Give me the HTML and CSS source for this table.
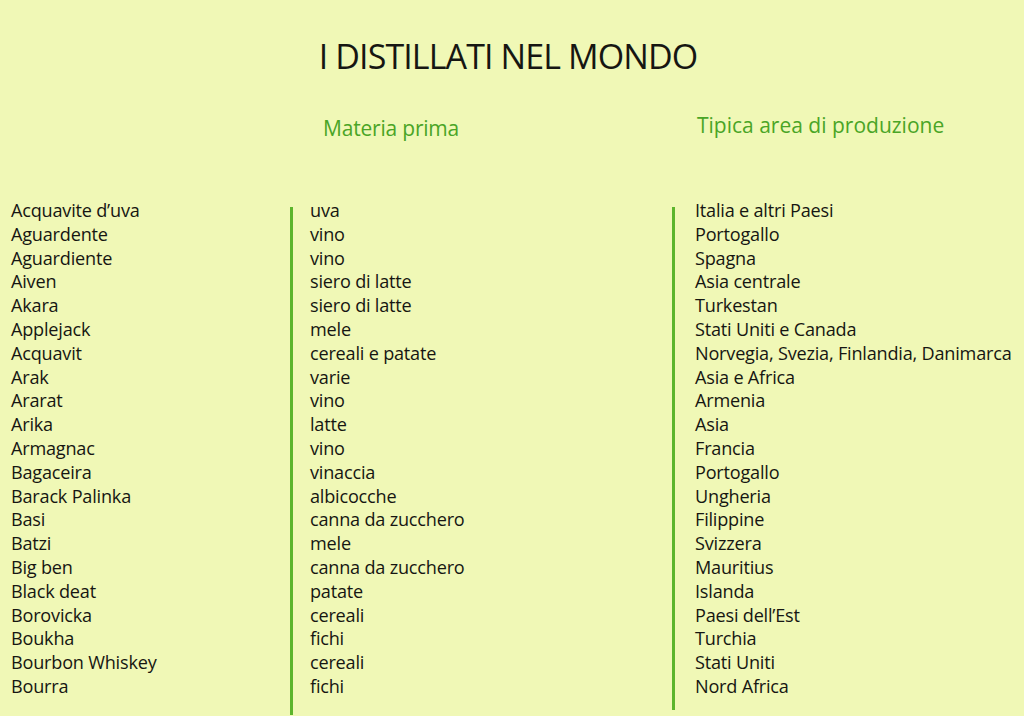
FILE: index.html
```html
<!DOCTYPE html>
<html lang="it">
<head>
<meta charset="utf-8">
<title>I distillati nel mondo</title>
<link rel="stylesheet" href="styles.css">
</head>
<body>
<main class="page">
  <h1 class="title">I DISTILLATI NEL MONDO</h1>
  <div class="heads">
    <div class="head-spacer"></div>
    <div class="head head-mid">Materia prima</div>
    <div class="head head-right">Tipica area di produzione</div>
  </div>
  <div class="table">
    <ul class="col col-name">
      <li>Acquavite d’uva</li><li>Aguardente</li><li>Aguardiente</li><li>Aiven</li><li>Akara</li><li>Applejack</li><li>Acquavit</li><li>Arak</li><li>Ararat</li><li>Arika</li><li>Armagnac</li><li>Bagaceira</li><li>Barack Palinka</li><li>Basi</li><li>Batzi</li><li>Big ben</li><li>Black deat</li><li>Borovicka</li><li>Boukha</li><li>Bourbon Whiskey</li><li>Bourra</li>
    </ul>
    <ul class="col col-mat">
      <li>uva</li><li>vino</li><li>vino</li><li>siero di latte</li><li>siero di latte</li><li>mele</li><li>cereali e patate</li><li>varie</li><li>vino</li><li>latte</li><li>vino</li><li>vinaccia</li><li>albicocche</li><li>canna da zucchero</li><li>mele</li><li>canna da zucchero</li><li>patate</li><li>cereali</li><li>fichi</li><li>cereali</li><li>fichi</li>
    </ul>
    <ul class="col col-area">
      <li>Italia e altri Paesi</li><li>Portogallo</li><li>Spagna</li><li>Asia centrale</li><li>Turkestan</li><li>Stati Uniti e Canada</li><li>Norvegia, Svezia, Finlandia, Danimarca</li><li>Asia e Africa</li><li>Armenia</li><li>Asia</li><li>Francia</li><li>Portogallo</li><li>Ungheria</li><li>Filippine</li><li>Svizzera</li><li>Mauritius</li><li>Islanda</li><li>Paesi dell’Est</li><li>Turchia</li><li>Stati Uniti</li><li>Nord Africa</li>
    </ul>
  </div>
</main>
</body>
</html>
```
FILE: styles.css
```css
html, body {
  margin: 0;
  padding: 0;
  background: #f0f8b6;
}
body {
  font-family: "Open Sans", "Noto Sans", sans-serif;
  color: #161612;
  width: 1024px;
  height: 716px;
  overflow: hidden;
}
.page {
  display: flex;
  flex-direction: column;
}
.title {
  margin: 34px 0 0 0;
  font-weight: 400;
  font-size: 34px;
  line-height: 44px;
  text-align: center;
  letter-spacing: -0.9px;
  padding-right: 8px;
}
.heads {
  display: grid;
  grid-template-columns: 290px 382px 1fr;
  margin-top: 34px;
  color: #4aa526;
  font-size: 21px;
  line-height: 26px;
}
.head-mid {
  padding-left: 33px;
  padding-top: 3px;
  letter-spacing: -0.2px;
}
.head-right {
  padding-left: 25px;
  letter-spacing: 0;
}
.table {
  display: grid;
  grid-template-columns: 290px 382px 1fr;
  margin-top: 58px;
  align-items: start;
}
.col {
  list-style: none;
  margin: 0;
  padding: 0;
  font-size: 18.1px;
  line-height: 23.8px;
  letter-spacing: -0.2px;
}
.col li {
  white-space: nowrap;
}
.col-name {
  padding-left: 11px;
}
.col-mat,
.col-area {
  border-left: 3px solid #5cb52c;
  box-sizing: border-box;
  margin-top: 8px;
}
.col-mat li:first-child,
.col-area li:first-child {
  margin-top: -8px;
}
.col-mat {
  padding-left: 17px;
  height: 508px;
}
.col-area {
  padding-left: 20px;
  height: 503px;
}
```
